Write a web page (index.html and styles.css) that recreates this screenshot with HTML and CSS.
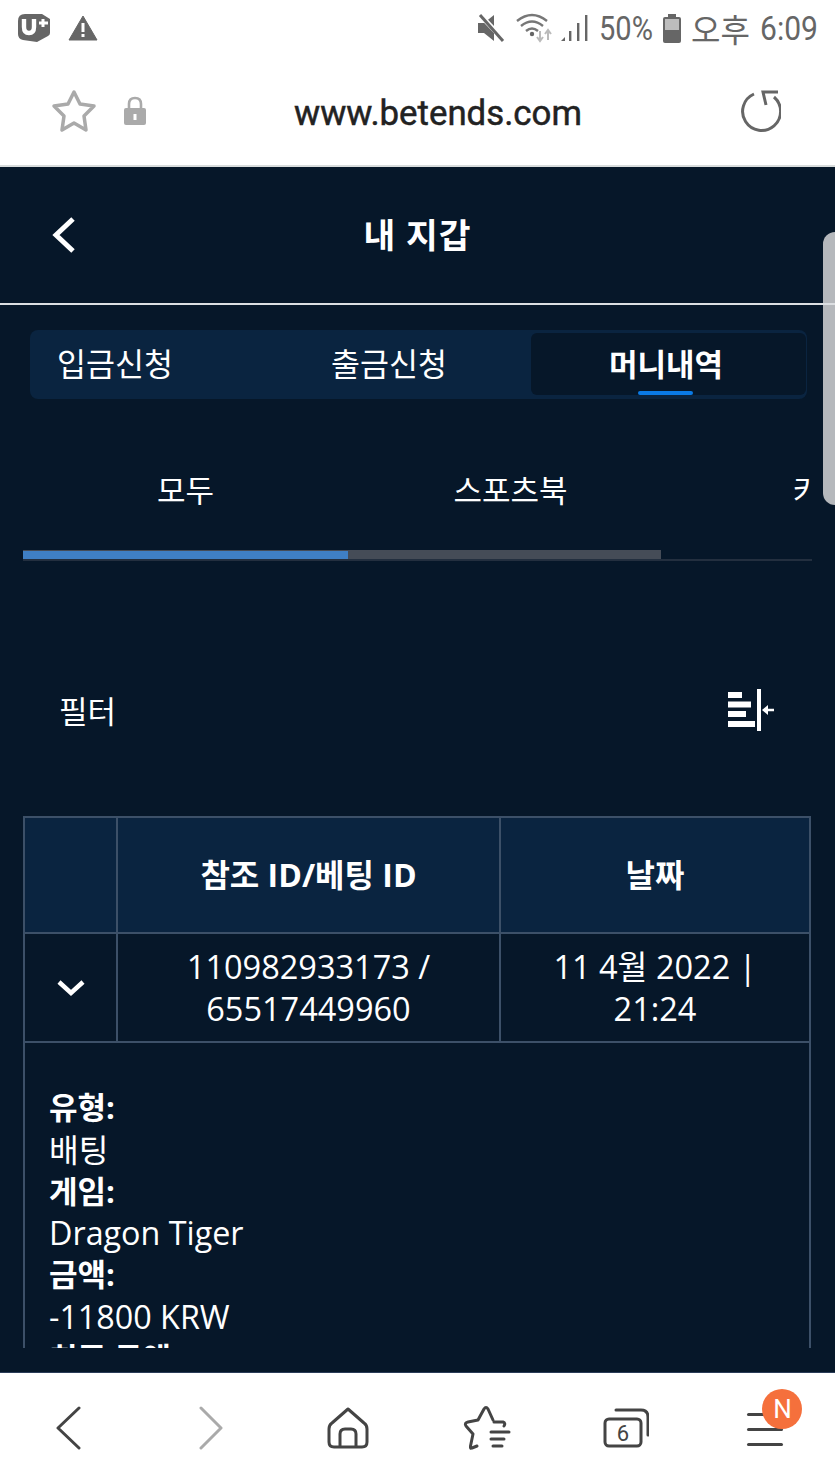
FILE: index.html
```html
<!DOCTYPE html>
<html lang="ko">
<head>
    <meta charset="UTF-8">
    <meta name="viewport" content="width=device-width, initial-scale=1.0">
    <title>내 지갑</title>
    <link rel="stylesheet" href="styles.css">
</head>
<body>
    <div class="status-bar">
        <div class="status-left">
            <svg width="34" height="30" viewBox="0 0 34 30">
                <path d="M8 1 H25 L33 6 V20 Q33 22 31 23 L20 29 L6 27 Q1 26 1 21 V8 Q1 1 8 1 Z" fill="#666"/>
                <path d="M7 6 V14 Q7 20 12 20 Q17 20 17 14 V6" fill="none" stroke="#fff" stroke-width="4.400"/>
                <path d="M26 6 V14 M22 10 H31" stroke="#fff" stroke-width="3"/>
            </svg>
            <svg width="30" height="26" viewBox="0 0 30 26">
                <path d="M15 1 L29 25 H1 Z" fill="#666" stroke="#666" stroke-linejoin="round"/>
                <rect x="13.5" y="8" width="3" height="9" fill="#fff"/>
                <rect x="13.5" y="19" width="3" height="3" fill="#fff"/>
            </svg>
        </div>
        <div class="status-right">
            <svg class="ico-mute" width="28" height="28" viewBox="0 0 28 28">
                <path d="M1 9 H7 L17 1 V27 L7 19 H1 Z" fill="#666"/>
                <path d="M4 2 L27 26" stroke="#fff" stroke-width="5"/>
                <path d="M3 1 L26 27" stroke="#666" stroke-width="3"/>
            </svg>
            <svg class="ico-wifi" width="37" height="30" viewBox="0 0 37 30">
                <path d="M1 8 Q16 -4 31 8 M5 13 Q16 4 27 13 M10 18 Q16 13 22 18" fill="none" stroke="#777" stroke-width="2.4"/>
                <circle cx="16" cy="21" r="2.2" fill="#666"/>
                <path d="M24 18 V27 M21 24 L24 28 L27 24" fill="none" stroke="#bbb" stroke-width="2"/>
                <path d="M32 27 V18 M29 21 L32 17 L35 21" fill="none" stroke="#bbb" stroke-width="2"/>
            </svg>
            <svg class="ico-signal" width="28" height="28" viewBox="0 0 28 28">
                <path d="M1 27 L5 23 V27 Z" fill="#666"/>
                <rect x="9" y="17" width="2.4" height="10" fill="#666"/>
                <rect x="17" y="9" width="2.4" height="18" fill="#666"/>
                <rect x="25" y="1" width="2.4" height="26" fill="#666"/>
            </svg>
            <span class="status-pct">50%</span>
            <svg class="ico-batt" width="18" height="29" viewBox="0 0 18 29">
                <rect x="5" y="0" width="8" height="3" fill="#666"/>
                <rect x="0" y="3" width="18" height="26" rx="2" fill="#666"/>
                <rect x="2" y="5" width="14" height="11" fill="#bdbdbd"/>
            </svg>
            <span class="status-time">오후</span>
            <span class="status-clock">6:09</span>
        </div>
    </div>

    <div class="url-bar">
        <svg class="ico-star" width="46" height="44" viewBox="0 0 46 44">
            <path d="M23 3 L29 15 L43 17 L33 27 L35 41 L23 34 L11 41 L13 27 L3 17 L17 15 Z" fill="none" stroke="#aaa" stroke-width="3.500" stroke-linejoin="round"/>
        </svg>
        <svg class="ico-lock" width="22" height="30" viewBox="0 0 22 30">
            <path d="M5 13 V8 Q5 2 11 2 Q17 2 17 8 V13" fill="none" stroke="#aaa" stroke-width="2.6"/>
            <rect x="0" y="12" width="22" height="17" rx="2" fill="#aaa"/>
            <rect x="9.5" y="18" width="3" height="6" fill="#fff"/>
        </svg>
        <div class="url-text">www.betends.com</div>
        <svg class="ico-reload" width="42" height="42" viewBox="0 0 42 42">
            <path d="M15 4 A19 19 0 1 0 35 7" fill="none" stroke="#666" stroke-width="3"/>
            <path d="M39 2 H24 L27 15" fill="none" stroke="#666" stroke-width="3"/>
        </svg>
    </div>

    <div class="screen">
        <div class="page">
            <div class="page-head">
                <svg class="head-back" width="26" height="38" viewBox="0 0 26 38">
                    <path d="M22 3 L5 19 L22 35" fill="none" stroke="#fff" stroke-width="5"/>
                </svg>
                <h1 class="head-title">내 지갑</h1>
            </div>

            <div class="wallet-tabs">
                <div class="wallet-tab first">입금신청</div>
                <div class="wallet-tab">출금신청</div>
                <div class="wallet-tab active">머니내역</div>
            </div>

            <div class="sub-tabs">
                <div class="sub-tab">모두</div>
                <div class="sub-tab">스포츠북</div>
                <div class="sub-tab">카지노</div>
            </div>
            <div class="sub-track">
                <div class="sub-grey"><div class="sub-blue"></div></div>
            </div>

            <div class="filter-row">
                <span class="filter-label">필터</span>
                <svg width="48" height="42" viewBox="0 0 48 42">
                    <rect x="1" y="3" width="14" height="6" fill="#fff"/>
                    <rect x="1" y="12.500" width="23" height="6" fill="#fff"/>
                    <rect x="1" y="22" width="18" height="6" fill="#fff"/>
                    <rect x="1" y="32" width="27" height="6" fill="#fff"/>
                    <rect x="30" y="0" width="4" height="42" fill="#fff"/>
                    <path d="M47 21 H39" stroke="#fff" stroke-width="2.500"/>
                    <path d="M35 21 L41 16 V26 Z" fill="#fff"/>
                </svg>
            </div>

            <table class="money-table">
                <tr>
                    <th class="col-toggle"></th>
                    <th class="col-id">참조 ID/베팅 ID</th>
                    <th>날짜</th>
                </tr>
                <tr class="money-row">
                    <td>
                        <svg class="row-arrow" width="30" height="18" viewBox="0 0 30 18">
                            <path d="M3 3 L15 14 L27 3" fill="none" stroke="#fff" stroke-width="4.5"/>
                        </svg>
                    </td>
                    <td>110982933173 /<br>65517449960</td>
                    <td>11 4월 2022 |<br>21:24</td>
                </tr>
                <tr>
                    <td class="detail" colspan="3">
                        <div class="detail-key">유형:</div>
                        <div class="detail-val">배팅</div>
                        <div class="detail-key">게임:</div>
                        <div class="detail-val">Dragon Tiger</div>
                        <div class="detail-key">금액:</div>
                        <div class="detail-val">-11800 KRW</div>
                        <div class="detail-key">최종 금액:</div>
                    </td>
                </tr>
            </table>
        </div>
        <div class="scroll-thumb"></div>
    </div>

    <div class="bottom-nav">
        <div class="nav-item">
            <svg width="44" height="44" viewBox="0 0 44 44">
                <path d="M31 2 L10 22 L31 42" fill="none" stroke="#444" stroke-width="3" stroke-linecap="round" stroke-linejoin="round"/>
            </svg>
        </div>
        <div class="nav-item">
            <svg width="44" height="44" viewBox="0 0 44 44">
                <path d="M14 2 L34 22 L14 42" fill="none" stroke="#aaa" stroke-width="3" stroke-linecap="round" stroke-linejoin="round"/>
            </svg>
        </div>
        <div class="nav-item">
            <svg width="44" height="44" viewBox="0 0 44 44">
                <path d="M22 3 L6 17 Q3 19 3 23 V36 Q3 41 8 41 H36 Q41 41 41 36 V23 Q41 19 38 17 Z" fill="none" stroke="#444" stroke-width="3" stroke-linejoin="round"/>
                <path d="M14 41 V28 Q14 23 19 23 H25 Q30 23 30 28 V41" fill="none" stroke="#444" stroke-width="3"/>
            </svg>
        </div>
        <div class="nav-item">
            <svg width="48" height="46" viewBox="0 0 48 46">
                <path d="M31 17 L40 17 Q43 18 41 21 M14 41 L9 43 Q7 44 7.500 41 L10 29 L3 21 Q1 18 5 17 L15 15 L21 4 Q23 1 25 4 L30 15" fill="none" stroke="#444" stroke-width="3" stroke-linecap="round" stroke-linejoin="round"/>
                <path d="M28 27 H46 M28 34 H41 M30 41 H39" fill="none" stroke="#444" stroke-width="3" stroke-linecap="round"/>
            </svg>
        </div>
        <div class="nav-item">
            <svg width="46" height="40" viewBox="0 0 46 40">
                <rect x="2" y="11" width="36" height="27" rx="4" fill="none" stroke="#444" stroke-width="3"/>
                <path d="M13 2 H38 Q45 2 45 9 V27" fill="none" stroke="#444" stroke-width="3" stroke-linecap="round"/>
                <text class="tab-count" x="20" y="33" text-anchor="middle">6</text>
            </svg>
        </div>
        <div class="nav-item">
            <div class="nav-menu">
                <i></i><i></i><i></i>
                <span class="nav-badge">N</span>
            </div>
        </div>
    </div>
</body>
</html>
```

FILE: styles.css
```css
*{
    margin: 0;
    padding: 0;
    box-sizing: border-box;
}
body{
    width: 835px;
    height: 1484px;
    overflow: hidden;
    display: flex;
    flex-direction: column;
    background: #fff;
    font-family: "Open Sans", "Noto Sans CJK KR", sans-serif;
}
svg{
    display: block;
    flex: none;
}

/* status bar */
.status-bar{
    flex: none;
    height: 56px;
    display: flex;
    justify-content: space-between;
    align-items: center;
    padding: 0 16px 0 17px;
    color: #666;
}
.status-left{
    display: flex;
    align-items: center;
    gap: 17px;
}
.status-right{
    display: flex;
    align-items: center;
}
.ico-wifi{
    margin-left: 11px;
}
.ico-signal{
    margin-left: 7px;
}
.status-pct{
    width: 53px;
    margin-left: 11px;
    font: 33px/1 Roboto, sans-serif;
    transform: scaleX(0.88);
    transform-origin: left center;
    white-space: nowrap;
}
.ico-batt{
    margin-left: 11px;
}
.status-time{
    width: 59px;
    margin-left: 10px;
    font: 32px/1 "Noto Sans CJK KR", sans-serif;
    white-space: nowrap;
}
.status-clock{
    width: 59px;
    margin-left: 10px;
    font: 33px/1 Roboto, sans-serif;
    transform: scaleX(0.91);
    transform-origin: left center;
    white-space: nowrap;
}

/* url bar */
.url-bar{
    flex: none;
    height: 111px;
    display: flex;
    align-items: center;
    padding: 0 54px 0 51px;
    border-bottom: 2px solid #d8dcdc;
}
.ico-lock{
    margin-left: 27px;
}
.url-text{
    flex: 1;
    padding: 6px 9px 0 0;
    text-align: center;
    font: 34.800px/1 Roboto, sans-serif;
    -webkit-text-stroke: 0.5px #222;
    color: #222;
}
.ico-reload{
    flex: none;
}

/* dark page */
.screen{
    position: relative;
    flex: 1 1 0;
    min-height: 0;
    padding-bottom: 24px;
    background: #061729;
    border-bottom: 1px solid #2a3c58;
}
.page{
    position: relative;
    z-index: 1;
    height: 100%;
    overflow: hidden;
    color: #fff;
}
.scroll-thumb{
    position: absolute;
    right: 0;
    top: 65px;
    width: 12px;
    height: 273px;
    background: #b5b8bc;
    border-radius: 12px 0 0 12px;
}
.page-head{
    height: 138px;
    display: flex;
    align-items: center;
    justify-content: center;
    position: relative;
    border-bottom: 2px solid #dcdfe2;
}
.head-back{
    position: absolute;
    left: 51px;
    top: 49px;
}
.head-title{
    font-size: 34.500px;
    font-weight: 700;
    letter-spacing: 1px;
    line-height: 1;
}

.wallet-tabs{
    display: grid;
    grid-template-columns: 217px 284px 1fr;
    height: 69px;
    margin: 25px 28px 0 30px;
    padding: 3px 1px 4px 0;
    background: #0a2440;
    border-radius: 8px;
}
.wallet-tab{
    display: flex;
    align-items: center;
    justify-content: center;
    padding-bottom: 4px;
    font-size: 31.500px;
}
.wallet-tab.first{
    justify-content: flex-start;
    padding-left: 27px;
}
.wallet-tab.active{
    position: relative;
    padding-right: 5px;
    font-size: 31px;
    font-weight: 700;
    background: #061729;
    border-radius: 6px;
}
.wallet-tab.active::after{
    content: "";
    position: absolute;
    left: 107px;
    bottom: 0;
    width: 55px;
    height: 4px;
    background: #0a7ae6;
    border-radius: 2px;
}

.sub-tabs{
    display: flex;
    width: 789px;
    height: 88px;
    margin: 47px 0 0 23px;
    overflow: hidden;
}
.sub-tab{
    flex: none;
    width: 325px;
    text-align: center;
    font-size: 31px;
    line-height: 88px;
}
.sub-track{
    width: 789px;
    margin: 16px 0 0 23px;
    border-bottom: 2px solid #232f3f;
}
.sub-grey{
    width: 638px;
    height: 9px;
    background: #454c57;
}
.sub-blue{
    width: 325px;
    height: 8px;
    margin-top: 1px;
    background: #3f7fc4;
    float: left;
}

.filter-row{
    display: flex;
    justify-content: space-between;
    align-items: center;
    height: 42px;
    margin: 128px 59px 0 59px;
}
.filter-label{
    padding-bottom: 2px;
    font-size: 31px;
}
.filter-row svg{
    margin-right: 1px;
}

.money-table{
    width: 788px;
    margin: 85px 0 0 23px;
    border-collapse: collapse;
    table-layout: fixed;
    font-size: 32.500px;
    line-height: 42px;
}
.money-table th,
.money-table td{
    border: 2px solid #3c5068;
    text-align: center;
}
.money-table th{
    height: 116px;
    background: #0a2440;
    font-size: 32px;
    font-weight: 700;
}
.col-toggle{
    width: 93px;
}
.col-id{
    width: 383px;
}
.money-row td{
    height: 109px;
}
.row-arrow{
    margin: 0 auto;
}
.money-table .detail{
    padding: 43px 0 0 24px;
    text-align: left;
}
.detail-key,
.detail-val{
    height: 41.800px;
    white-space: nowrap;
}
.detail-key{
    font-size: 31px;
    font-weight: 700;
}
.detail-val{
    font-size: 32.300px;
}

/* bottom bar */
.bottom-nav{
    flex: none;
    height: 111px;
    display: grid;
    grid-template-columns: repeat(6, 1fr);
    align-items: center;
    background: #fff;
    padding-bottom: 1px;
}
.nav-item{
    display: flex;
    justify-content: center;
}
.tab-count{
    font: 22px Roboto, sans-serif;
    fill: #444;
}
.nav-menu{
    position: relative;
    display: flex;
    flex-direction: column;
    gap: 12px;
    width: 36px;
    margin-top: 3px;
}
.nav-menu i{
    height: 3px;
    background: #444;
    border-radius: 2px;
}
.nav-badge{
    position: absolute;
    left: 15px;
    top: -24px;
    width: 40px;
    height: 40px;
    border-radius: 50%;
    background: #f5703c;
    color: #fff;
    font: 26px/40px Roboto, sans-serif;
    text-align: center;
}
```
